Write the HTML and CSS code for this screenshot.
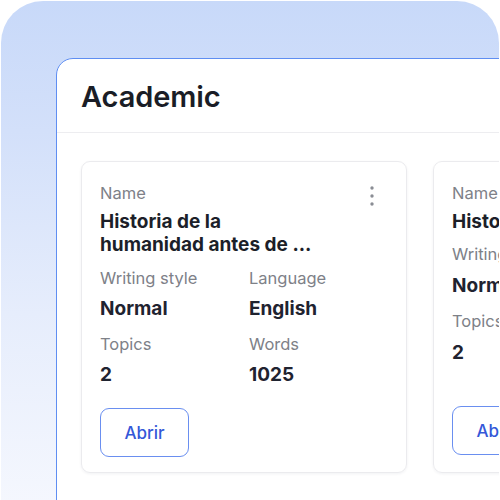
FILE: index.html
```html
<!DOCTYPE html>
<html>
<head>
<meta charset="utf-8">
<link rel="stylesheet" href="styles.css">
</head>
<body>
<div class="stage">
  <div class="backdrop">
    <div class="panel">
      <div class="panel-head">
        <h1 class="panel-title">Academic</h1>
      </div>
      <div class="cards">
        <div class="card">
          <div class="card-top">
            <div class="field">
              <div class="label">Name</div>
              <div class="title">Historia de la<br>humanidad antes de ...</div>
            </div>
            <svg class="kebab" width="4" height="20" viewBox="0 0 4 20"><circle cx="2" cy="2" r="1.7" fill="#8a8d94"/><circle cx="2" cy="10" r="1.7" fill="#8a8d94"/><circle cx="2" cy="18" r="1.7" fill="#8a8d94"/></svg>
          </div>
          <div class="grid">
            <div class="label">Writing style</div>
            <div class="label">Language</div>
            <div class="value">Normal</div>
            <div class="value">English</div>
            <div class="label l2">Topics</div>
            <div class="label l2">Words</div>
            <div class="value">2</div>
            <div class="value">1025</div>
          </div>
          <button class="btn">Abrir</button>
        </div>
        <div class="card card-short">
          <div class="card-top">
            <div class="field">
              <div class="label">Name</div>
              <div class="title">Historia moderna</div>
            </div>
          </div>
          <div class="grid">
            <div class="label">Writing style</div>
            <div class="label">Language</div>
            <div class="value">Normal</div>
            <div class="value">Spanish</div>
            <div class="label l2">Topics</div>
            <div class="label l2">Words</div>
            <div class="value">2</div>
            <div class="value">800</div>
          </div>
          <button class="btn">Abrir</button>
        </div>
      </div>
    </div>
  </div>
</div>
</body>
</html>
```
FILE: styles.css
```css
html, body {
  margin: 0;
  padding: 0;
  background: #ffffff;
}
body {
  width: 500px;
  height: 500px;
  overflow: hidden;
  font-family: "Inter", "Liberation Sans", sans-serif;
}
.stage {
  width: 500px;
  height: 500px;
  padding: 1px 1px 0 1px;
  box-sizing: border-box;
  overflow: hidden;
}
.backdrop {
  height: 520px;
  border-radius: 42px 42px 0 0;
  background: linear-gradient(180deg, #c8d9f9 0%, #d3e0fa 25%, #e6edfc 60%, #f6f8fe 100%);
  padding: 57px 0 0 55px;
  box-sizing: border-box;
  overflow: hidden;
}
.panel {
  width: 520px;
  height: 500px;
  background: #ffffff;
  border: 1.5px solid #5f8ef2;
  border-radius: 17px 0 0 0;
  box-sizing: border-box;
}
.panel-head {
  height: 74px;
  box-sizing: border-box;
  border-bottom: 1px solid #ededf0;
  padding: 0 0 0 24px;
  display: flex;
  align-items: center;
}
.panel-title {
  margin: 0;
  font-size: 29px;
  font-weight: 600;
  color: #1a1d26;
  letter-spacing: -0.1px;
  position: relative;
  top: 1px;
}
.cards {
  display: flex;
  gap: 26px;
  padding: 28px 0 0 24px;
}
.card {
  flex: 0 0 326px;
  height: 312px;
  box-sizing: border-box;
  border: 1px solid #ebebee;
  border-radius: 9px;
  box-shadow: 0 1px 3px rgba(20, 30, 60, 0.06);
  padding: 20px 18px 0 18px;
  display: flex;
  flex-direction: column;
}
.card-top {
  display: flex;
  justify-content: space-between;
  align-items: flex-start;
}
.kebab {
  margin: 4px 14px 0 0;
}
.label {
  font-size: 16.5px;
  line-height: 22px;
  color: #7e8188;
}
.title {
  font-size: 19px;
  line-height: 23px;
  font-weight: 700;
  color: #1c1f29;
  margin-top: 6px;
}
.grid {
  display: grid;
  grid-template-columns: 149px 1fr;
  margin-top: 11px;
}
.grid .value {
  font-size: 19px;
  line-height: 24px;
  font-weight: 700;
  color: #1f2330;
  margin-top: 8px;
}
.grid .l2 {
  margin-top: 12px;
}
.btn {
  margin-top: 21px;
  width: 89px;
  height: 49px;
  border: 1.5px solid #6a8ff0;
  border-radius: 9px;
  background: #ffffff;
  color: #3458d8;
  font-family: "Inter", "Liberation Sans", sans-serif;
  font-size: 17px;
  font-weight: 500;
  padding: 0;
}
.card-short .btn {
  margin-top: auto;
  margin-bottom: 17px;
}
.card-short .grid {
  margin-top: 10px;
}
.card-short .value {
  margin-top: 9px;
}
.card-short .l2 {
  margin-top: 12px;
}
```
